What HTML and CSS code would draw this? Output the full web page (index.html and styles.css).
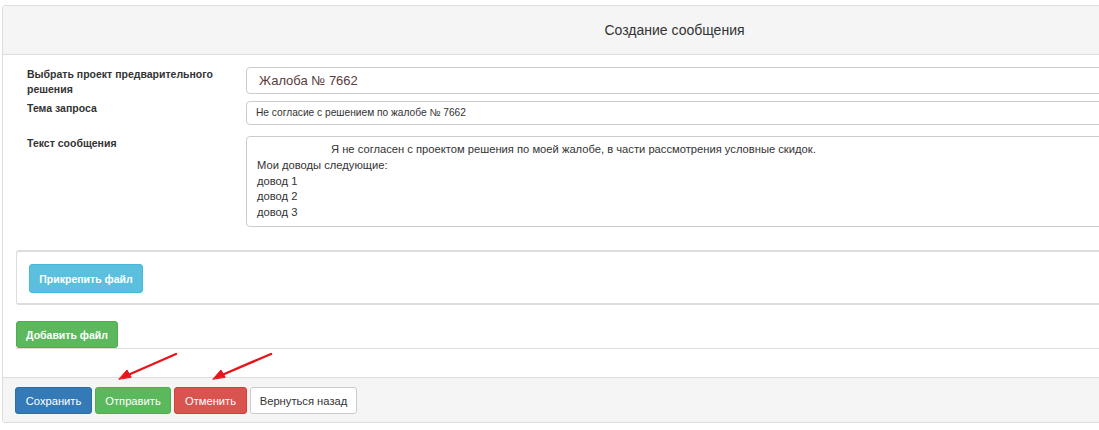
FILE: index.html
```html
<!DOCTYPE html>
<html lang="ru">
<head>
    <meta charset="UTF-8">
    <title>Создание сообщения</title>
    <link rel="stylesheet" href="styles.css">
</head>
<body>
    <div class="panel">
        <div class="panel-heading">Создание сообщения</div>

        <div class="panel-body">
            <div class="form-row">
                <label class="form-label">Выбрать проект предварительного решения</label>
                <div class="form-control select-control">Жалоба № 7662</div>
            </div>
            <div class="form-row row-small">
                <label class="form-label">Тема запроса</label>
                <div class="form-control input-control">Не согласие с решением по жалобе № 7662</div>
            </div>
            <div class="form-row row-text">
                <label class="form-label">Текст сообщения</label>
                <div class="form-control textarea-control">
                    <div class="indent">Я не согласен с проектом решения по моей жалобе, в части рассмотрения условные скидок.</div>
                    <div>Мои доводы следующие:</div>
                    <div>довод 1</div>
                    <div>довод 2</div>
                    <div>довод 3</div>
                </div>
            </div>

            <div class="files-panel">
                <button class="btn btn-info btn-bold">Прикрепить файл</button>
            </div>

            <div class="add-file">
                <button class="btn btn-success btn-bold">Добавить файл</button>
            </div>
        </div>

        <div class="panel-footer">
            <button class="btn btn-primary">Сохранить</button>
            <button class="btn btn-success">Отправить</button>
            <button class="btn btn-danger">Отменить</button>
            <button class="btn btn-default">Вернуться назад</button>
        </div>
    </div>

    <svg class="arrows" width="300" height="40" viewBox="0 0 300 40">
        <g stroke="#e8141b" stroke-width="2.4" stroke-linecap="round" fill="#e8141b">
            <line x1="176" y1="5" x2="128" y2="26"/>
            <polygon points="119,30 127,21 131,28" stroke-width="1"/>
            <line x1="271" y1="5" x2="222" y2="26"/>
            <polygon points="213,30 221,21 225,28" stroke-width="1"/>
        </g>
    </svg>
</body>
</html>
```

FILE: styles.css
```css
* {
    box-sizing: border-box;
}

body {
    margin: 0;
    padding: 5px 0 0 2px;
    overflow: hidden;
    background: #fff;
    font-family: "Liberation Sans", Arial, sans-serif;
    color: #333;
    position: relative;
}

.panel {
    width: 1120px;
    border: 1px solid #ddd;
    border-radius: 3px;
}

.panel-heading {
    height: 49px;
    background: #f5f5f5;
    border-bottom: 1px solid #ddd;
    display: flex;
    align-items: center;
    justify-content: center;
    padding-left: 225px;
    font-size: 14px;
    color: #333;
}

.panel-body {
    padding: 12px 0 28px 12px;
}

.form-row {
    display: flex;
    align-items: flex-start;
    padding-left: 12px;
}

.form-label {
    width: 219px;
    padding-top: 0;
    padding-right: 20px;
    font-size: 10.5px;
    font-weight: bold;
    line-height: 15px;
    color: #333;
}

.form-control {
    flex: 1;
    border: 1px solid #ccc;
    border-radius: 4px;
    background: #fff;
    color: #555;
}

.select-control {
    height: 27px;
    padding: 5px 12px;
    font-size: 13px;
    color: #5a3c3c;
}

.row-small {
    margin-top: 4px;
}

.row-small .form-label {
    padding-top: 0;
}

.input-control {
    height: 24px;
    padding: 5px 9px;
    font-size: 10.2px;
    color: #333;
}

.row-text {
    margin-top: 11px;
}

.textarea-control {
    height: 91px;
    padding: 5px 10px;
    font-size: 11.2px;
    line-height: 15.8px;
    color: #333;
}

.indent {
    padding-left: 74px;
}

.files-panel {
    margin-top: 23px;
    height: 55px;
    border-top: 2px solid #ddd;
    border-left: 1px solid #ddd;
    border-bottom: 2px solid #ddd;
    border-radius: 3px 0 0 3px;
    padding: 12px 0 0 12px;
    margin-left: 1px;
}

.add-file {
    margin-top: 16px;
    margin-left: 1px;
    border-bottom: 1px solid #ddd;
}

.btn {
    display: inline-block;
    height: 27px;
    padding: 0;
    border: 1px solid transparent;
    border-radius: 3px;
    font-family: "Liberation Sans", Arial, sans-serif;
    font-size: 11.2px;
    color: #fff;
    white-space: nowrap;
    cursor: pointer;
    vertical-align: top;
}

.btn-bold {
    font-size: 10.5px;
    font-weight: bold;
}

.files-panel .btn {
    width: 114px;
    height: 29px;
}

.add-file .btn {
    width: 102px;
}

.btn-info {
    background: #5bc0de;
    border-color: #46b8da;
}

.btn-success {
    background: #5cb85c;
    border-color: #4cae4c;
}

.btn-primary {
    background: #337ab7;
    border-color: #2e6da4;
}

.btn-danger {
    background: #d9534f;
    border-color: #d43f3a;
}

.btn-default {
    background: #fff;
    border-color: #ccc;
    color: #333;
}

.panel-footer {
    height: 45px;
    background: #f5f5f5;
    border-top: 1px solid #ddd;
    padding: 9px 0 0 12px;
    display: flex;
    gap: 3px;
}

.panel-footer .btn-primary { width: 77px; }
.panel-footer .btn-success { width: 76px; }
.panel-footer .btn-danger { width: 73px; }
.panel-footer .btn-default { width: 107px; }

.arrows {
    position: absolute;
    left: 0;
    top: 349px;
}
```
